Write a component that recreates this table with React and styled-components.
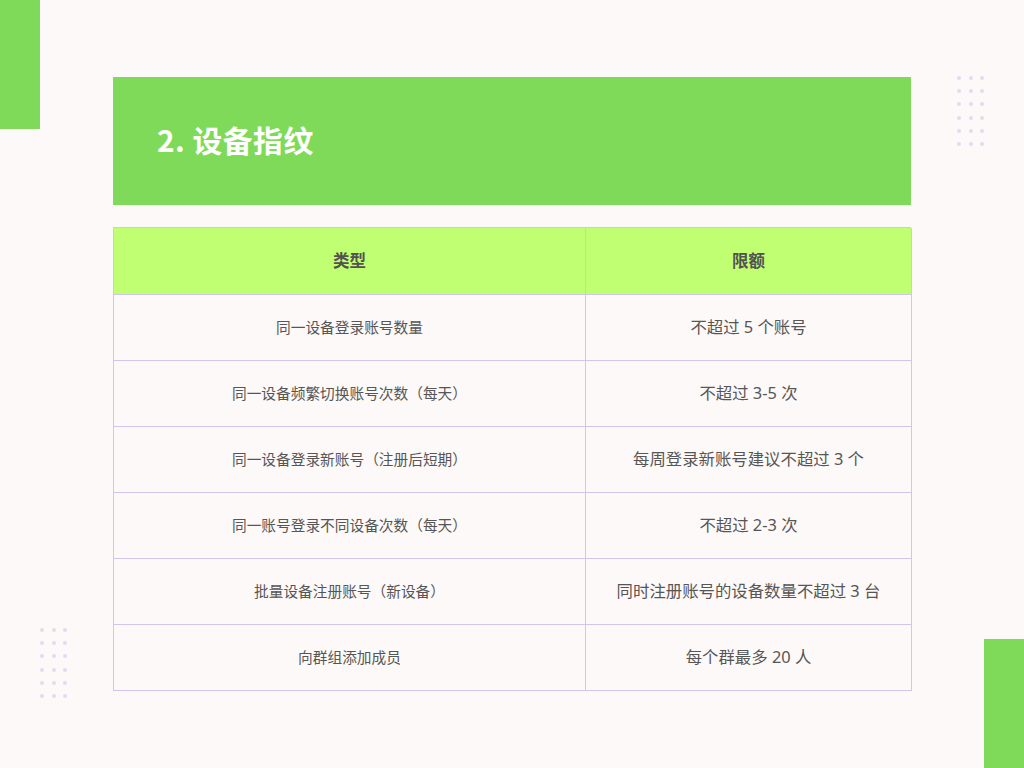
import React from 'react';
import styled, { createGlobalStyle } from 'styled-components';

const GlobalStyle = createGlobalStyle`
    html, body {
        margin: 0;
        padding: 0;
        background: #fdf9f8;
    }
    body {
        font-family: "Noto Sans", "Noto Sans CJK SC", sans-serif;
    }
`;

const Page = styled.div`
    position: relative;
    width: 1024px;
    height: 768px;
    overflow: hidden;
    background: #fdf9f8;
    box-sizing: border-box;
    padding: 77px 113px 0 113px;
    display: flex;
    flex-direction: column;
    gap: 22px;
`;

const Corner = styled.div`
    position: absolute;
    width: 40px;
    height: 129px;
    background: #80da5a;
    ${p => p.top ? 'top: 0; left: 0;' : 'bottom: 0; right: 0;'}
`;

const Dots = styled.div`
    position: absolute;
    left: ${p => p.x}px;
    top: ${p => p.y}px;
    display: grid;
    grid-template-columns: repeat(3, 4px);
    grid-auto-rows: 4px;
    column-gap: 7.5px;
    row-gap: 9.2px;
`;

const Dot = styled.span`
    width: 4px;
    height: 4px;
    border-radius: 50%;
    background: #e2dcf3;
`;

const Banner = styled.div`
    height: 128px;
    background: #80da5a;
    display: flex;
    align-items: center;
    padding-left: 44px;
    padding-bottom: 4px;
    box-sizing: border-box;
`;

const Title = styled.h1`
    margin: 0;
    color: #fff;
    font-family: "Noto Sans CJK SC", sans-serif;
    font-weight: 700;
    font-size: 29.8px;
    letter-spacing: 0.5px;
`;

const Table = styled.div`
    display: grid;
    grid-template-columns: 472px 326px;
    grid-template-rows: 67px repeat(6, 66px);
    border-top: 1px solid #cfc7ef;
    border-left: 1px solid #cfc7ef;
`;

const Cell = styled.div`
    display: flex;
    align-items: center;
    justify-content: center;
    padding-bottom: 3px;
    box-sizing: border-box;
    border-right: 1px solid #cfc7ef;
    border-bottom: 1px solid #cfc7ef;
    background: ${p => p.head ? '#c1ff72' : '#fdf9f8'};
    color: ${p => p.head ? '#525252' : '#565656'};
    font-family: "Noto Sans", "Noto Sans CJK SC", sans-serif;
    font-weight: ${p => p.head ? 700 : 400};
    font-size: ${p => p.head ? '16.5px' : p.small ? '14.7px' : '16.4px'};
`;

const rows = [
    ['同一设备登录账号数量', '不超过 5 个账号'],
    ['同一设备频繁切换账号次数（每天）', '不超过 3-5 次'],
    ['同一设备登录新账号（注册后短期）', '每周登录新账号建议不超过 3 个'],
    ['同一账号登录不同设备次数（每天）', '不超过 2-3 次'],
    ['批量设备注册账号（新设备）', '同时注册账号的设备数量不超过 3 台'],
    ['向群组添加成员', '每个群最多 20 人'],
];

const DotGrid = ({ x, y }) => (
    <Dots x={x} y={y}>
        {Array.from({ length: 18 }).map((_, i) => <Dot key={i} />)}
    </Dots>
);

const App = () => (
    <>
        <GlobalStyle />
        <Page>
            <Corner top />
            <Corner />
            <DotGrid x={957} y={76} />
            <DotGrid x={40} y={628} />
            <Banner>
                <Title>2. 设备指纹</Title>
            </Banner>
            <Table>
                <Cell head>类型</Cell>
                <Cell head>限额</Cell>
                {rows.map(([a, b]) => (
                    <React.Fragment key={a}>
                        <Cell small>{a}</Cell>
                        <Cell>{b}</Cell>
                    </React.Fragment>
                ))}
            </Table>
        </Page>
    </>
);

export default App;
